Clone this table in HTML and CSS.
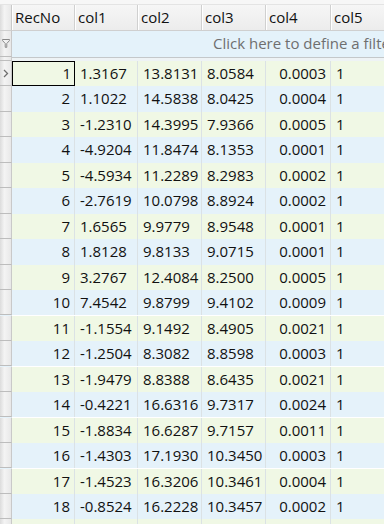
FILE: index.html
```html
<!DOCTYPE html>
<html>
<head>
<meta charset="utf-8">
<link rel="stylesheet" href="styles.css">
</head>
<body>
<div class="grid">
  <div class="topstrip"></div>
  <div class="row header">
    <div class="ind"></div>
    <div class="hc">RecNo</div>
    <div class="hc">col1</div>
    <div class="hc">col2</div>
    <div class="hc">col3</div>
    <div class="hc">col4</div>
    <div class="hc">col5</div>
    <div class="hc"></div>
  </div>
  <div class="row filter">
    <div class="ind"><svg width="8" height="9" viewBox="0 0 8 9"><path d="M0.5 0.5 H7.5 V1.5 L4.8 4.5 V8.3 H3.2 V4.5 L0.5 1.5 Z" fill="none" stroke="#8a8a8a" stroke-width="1"/></svg></div>
    <div class="ftext">Click here to define a filter</div>
  </div>
  <div class="sep"><div class="ind"></div><div class="sepfill"></div></div>
  <div id="rows"></div>
</div>
<script>
const data = [
[1,"1.3167","13.8131","8.0584","0.0003","1"],
[2,"1.1022","14.5838","8.0425","0.0004","1"],
[3,"-1.2310","14.3995","7.9366","0.0005","1"],
[4,"-4.9204","11.8474","8.1353","0.0001","1"],
[5,"-4.5934","11.2289","8.2983","0.0002","1"],
[6,"-2.7619","10.0798","8.8924","0.0002","1"],
[7,"1.6565","9.9779","8.9548","0.0001","1"],
[8,"1.8128","9.8133","9.0715","0.0001","1"],
[9,"3.2767","12.4084","8.2500","0.0005","1"],
[10,"7.4542","9.8799","9.4102","0.0009","1"],
[11,"-1.1554","9.1492","8.4905","0.0021","1"],
[12,"-1.2504","8.3082","8.8598","0.0003","1"],
[13,"-1.9479","8.8388","8.6435","0.0021","1"],
[14,"-0.4221","16.6316","9.7317","0.0024","1"],
[15,"-1.8834","16.6287","9.7157","0.0011","1"],
[16,"-1.4303","17.1930","10.3450","0.0003","1"],
[17,"-1.4523","16.3206","10.3461","0.0004","1"],
[18,"-0.8524","16.2228","10.3457","0.0002","1"],
[19,"-0.9341","17.2951","10.3474","0.0003","1"]
];
const host = document.getElementById('rows');
data.forEach((r, i) => {
  const row = document.createElement('div');
  row.className = 'row data ' + (i % 2 === 0 ? 'green' : 'blue');
  const ind = document.createElement('div');
  ind.className = 'ind';
  if (i === 0) {
    ind.innerHTML = '<svg width="6" height="9" viewBox="0 0 6 9"><path d="M1 1 L4.5 4.5 L1 8" fill="none" stroke="#6e6e6e" stroke-width="1.3"/></svg>';
  }
  row.appendChild(ind);
  const cls = ['c r', 'c', 'c', 'c', 'c r', 'c', 'c'];
  const vals = [r[0], r[1], r[2], r[3], r[4], r[5], ''];
  vals.forEach((v, j) => {
    const c = document.createElement('div');
    c.className = cls[j] + (i === 0 && j === 0 ? ' focus' : '');
    c.textContent = v;
    row.appendChild(c);
  });
  host.appendChild(row);
});
</script>
</body>
</html>
```
FILE: styles.css
```css
html, body {
  margin: 0;
  padding: 0;
  overflow: hidden;
  background: #ffffff;
}
body {
  width: 384px;
  height: 524px;
  font-family: "Open Sans", "Noto Sans", sans-serif;
  font-size: 15px;
  color: #111111;
}
.grid {
  width: 520px;
}
.topstrip {
  height: 5px;
  background: #f7f7f7;
  border-bottom: 1px solid #e4e4e4;
  box-sizing: border-box;
}
.row {
  display: grid;
  grid-template-columns: 12px 63px 63px 64px 64px 65px 1fr;
}
.ind {
  box-sizing: border-box;
  background: linear-gradient(to right, #dcdcdc, #f4f4f4 40%, #e8e8e8);
  border-right: 1px solid #c9c9c9;
  border-bottom: 1px solid #bdbdbd;
  display: flex;
  align-items: center;
  justify-content: center;
}
.header {
  height: 26px;
}
.header .ind {
  border-bottom: 1px solid #cfcfcf;
}
.hc {
  box-sizing: border-box;
  background: linear-gradient(#f6f6f6, #ececec);
  border-right: 1px solid #d0d0d0;
  border-bottom: 1px solid #cfcfcf;
  padding: 0 3px;
  line-height: 25px;
  white-space: nowrap;
  box-shadow: inset 1px 0 0 #ffffff;
}
.filter {
  height: 26px;
  grid-template-columns: 12px 1fr;
  background: #e4f2fa;
}
.ftext {
  color: #6f6f6f;
  padding-left: 201px;
  line-height: 25px;
  white-space: nowrap;
  box-sizing: border-box;
  background: #e4f2fa;
}
.sep {
  display: grid;
  grid-template-columns: 12px 1fr;
  height: 4px;
}
.sep .ind {
  border-bottom: 1px solid #bdbdbd;
}
.sepfill {
  border-top: 1px solid #c4c8ca;
  background: #eef3f5;
}
.data {
  height: 25.47px;
}
.green .c { background: #f0f8e5; }
.blue .c { background: #e5f2fa; }
.c {
  box-sizing: border-box;
  border-right: 1px solid #dbe2e5;
  padding: 0 5px;
  line-height: 25px;
  white-space: nowrap;
}
.c.r {
  text-align: right;
  padding: 0 4px 0 5px;
}
.c.focus {
  border: 1px solid #000000;
  line-height: 23px;
  padding-right: 3px;
}
```
